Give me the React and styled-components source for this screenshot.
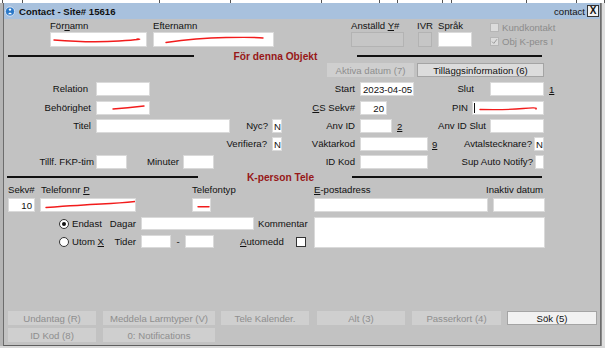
import React from "react";
import styled, { createGlobalStyle } from "styled-components";

const GlobalStyle = createGlobalStyle`
  html, body { margin: 0; padding: 0; background: #d6d6d6; }
  body { font-family: "Liberation Sans", Arial, sans-serif; font-size: 9.6px; color: #111; }
`;

const Desktop = styled.div`
  width: 605px;
  height: 348px;
  overflow: hidden;
  background: #d6d6d6;
  display: flex;
  flex-direction: column;
`;

const TopStrip = styled.div`
  height: 3px;
  display: flex;
  background: #fff;
  flex: none;
`;

const StripCell = styled.div`
  width: ${(p) => p.$w}px;
  flex: none;
  box-sizing: border-box;
  border-right: 1px solid #555;
  height: 3px;
`;

const Middle = styled.div`
  display: flex;
  flex: none;
  height: 343px;
`;

const LeftEdge = styled.div`
  width: 3px;
  background: #b4b4b4;
  flex: none;
`;

const RightEdge = styled.div`
  width: 4px;
  flex: none;
  background: #dedede;
  border-left: 1px solid #8a8a8a;
  box-sizing: border-box;
`;

const Window = styled.div`
  width: 598px;
  height: 343px;
  box-sizing: border-box;
  flex: none;
  background: #c2c2c2;
  border-left: 1px solid #6c6c6c;
  border-right: 1px solid #6c6c6c;
  border-bottom: 1px solid #5e5e5e;
  display: flex;
  flex-direction: column;
`;

const TitleBar = styled.div`
  height: 16px;
  flex: none;
  background: #a8c1dd;
  display: flex;
  align-items: center;
  padding: 0 1px 0 1px;
`;

const TitleText = styled.span`
  font-weight: bold;
  margin-left: 4px;
  white-space: nowrap;
`;

const TitleRight = styled.span`
  margin-left: auto;
  margin-right: 2px;
`;

const CloseBtn = styled.div`
  width: 12px;
  height: 12px;
  box-sizing: border-box;
  border: 1px solid #333;
  background: #f2f2f2;
  font-weight: bold;
  font-size: 10px;
  line-height: 10px;
  text-align: center;
`;

const HeaderRow = styled.div`
  display: flex;
  align-items: flex-start;
  padding-top: 2px;
  height: 26px;
  flex: none;
`;

const Col = styled.div`
  display: flex;
  flex-direction: column;
  width: ${(p) => p.$w}px;
  margin-left: ${(p) => p.$ml || 0}px;
  flex: none;
`;

const HeadLabel = styled.div`
  height: 11px;
  line-height: 10px;
  white-space: nowrap;
`;

const Field = styled.div`
  position: relative;
  box-sizing: border-box;
  flex: none;
  width: ${(p) => p.$w}px;
  height: ${(p) => p.$h || 14}px;
  margin-left: ${(p) => p.$ml || 0}px;
  background: ${(p) => (p.$disabled ? "#c6c6c6" : "#fff")};
  border: 1px solid ${(p) => (p.$disabled ? "#b3b3b3" : "#dadada")};
  display: flex;
  align-items: center;
  justify-content: ${(p) => (p.$right ? "flex-end" : "flex-start")};
  padding: 0 2px;
  white-space: nowrap;
  overflow: hidden;
`;

const Caret = styled.span`
  width: 1px;
  height: 10px;
  background: #111;
  margin-left: -1px;
`;

const Scribble = styled.svg`
  position: absolute;
  left: 0;
  top: 0;
  width: 100%;
  height: 100%;
  overflow: visible;
`;

const CheckCol = styled.div`
  display: flex;
  flex-direction: column;
  margin-left: ${(p) => p.$ml}px;
  padding-top: 2px;
  gap: 5px;
`;

const CheckRow = styled.div`
  display: flex;
  align-items: center;
  height: 9px;
  gap: 3px;
  color: ${(p) => (p.$disabled ? "#8c8c8c" : "#111")};
  white-space: nowrap;
`;

const Box = styled.span`
  width: ${(p) => p.$size || 9}px;
  height: ${(p) => p.$size || 9}px;
  box-sizing: border-box;
  flex: none;
  background: ${(p) => (p.$disabled ? "#dcdcdc" : "#fff")};
  border: 1px solid ${(p) => (p.$disabled ? "#b6b6b6" : "#333")};
  display: flex;
  align-items: center;
  justify-content: center;
  margin-left: ${(p) => p.$ml || 0}px;
`;

const SectionHead = styled.div`
  display: flex;
  align-items: center;
  height: 12px;
  flex: none;
  width: ${(p) => p.$w}px;
  margin-left: ${(p) => p.$ml}px;
  margin-top: ${(p) => p.$mt}px;
`;

const Line = styled.div`
  width: ${(p) => p.$w}px;
  height: 2px;
  background: #111;
  flex: none;
`;

const SectionTitle = styled.div`
  flex: 1;
  text-align: center;
  font-weight: bold;
  font-size: 10.2px;
  color: #971818;
  padding-left: ${(p) => p.$shift || 0}px;
  white-space: nowrap;
`;

const Row = styled.div`
  display: flex;
  align-items: center;
  height: ${(p) => p.$h || 14}px;
  margin-top: ${(p) => p.$mt || 0}px;
  flex: none;
`;

const Label = styled.span`
  flex: none;
  width: ${(p) => (p.$w ? `${p.$w}px` : "auto")};
  margin-left: ${(p) => p.$ml || 0}px;
  text-align: ${(p) => (p.$left ? "left" : "right")};
  white-space: nowrap;
  line-height: 14px;
`;

const Hot = styled.span`
  text-decoration: underline;
  text-underline-offset: 1px;
`;

const Link = styled.span`
  flex: none;
  margin-left: ${(p) => p.$ml}px;
  text-decoration: underline;
  text-underline-offset: 1px;
  width: 6px;
`;

const Button = styled.div`
  flex: none;
  box-sizing: border-box;
  width: ${(p) => p.$w}px;
  height: 14px;
  margin-left: ${(p) => p.$ml || 0}px;
  display: flex;
  align-items: center;
  justify-content: center;
  white-space: nowrap;
  background: ${(p) => (p.$active ? "#f1f1f1" : "#cfcfcf")};
  color: ${(p) => (p.$active ? "#111" : "#8e8e8e")};
  border: 1px solid ${(p) => (p.$active ? "#a4a4a4" : "#cfcfcf")};
`;

const LowerArea = styled.div`
  display: flex;
  margin-top: 5px;
  flex: none;
`;

const LeftBlock = styled.div`
  width: 310px;
  display: flex;
  flex-direction: column;
  gap: 5px;
`;

const Radio = styled.span`
  width: 10px;
  height: 10px;
  box-sizing: border-box;
  border-radius: 50%;
  border: 1px solid #333;
  background: #fff;
  display: flex;
  align-items: center;
  justify-content: center;
  flex: none;
  &::after {
    content: "";
    width: 4px;
    height: 4px;
    border-radius: 50%;
    background: ${(p) => (p.$on ? "#111" : "transparent")};
  }
`;

const RadioItem = styled.div`
  display: flex;
  align-items: center;
  gap: 3px;
  width: 45px;
  margin-left: 55px;
  flex: none;
  white-space: nowrap;
`;

const Dash = styled.span`
  width: 14px;
  text-align: center;
  flex: none;
`;

const Footer = styled.div`
  margin-top: auto;
  padding-bottom: 3px;
  display: flex;
  flex-direction: column;
  gap: 3px;
`;

const BottomStrip = styled.div`
  height: 2px;
  background: #d8d8d8;
  flex: none;
`;

const Scrib = ({ d }) => (
  <Scribble>
    <path d={d} fill="none" stroke="#f21c1c" strokeWidth="1.4" strokeLinecap="round" />
  </Scribble>
);

const AppIcon = () => (
  <svg width="10" height="11" viewBox="0 0 10 11">
    <circle cx="5" cy="5.5" r="4.6" fill="#2a78c8" stroke="#e8f0fa" strokeWidth="0.8" />
    <circle cx="5" cy="3.6" r="1.2" fill="#fff" />
    <path d="M3 8.2 Q5 4.8 7 8.2 Z" fill="#fff" />
  </svg>
);

const stripCells = [3, 20, 137, 71, 91, 58, 18, 45, 9, 75, 50, 28];

export default function App() {
  return (
    <>
      <GlobalStyle />
      <Desktop>
        <TopStrip>
          {stripCells.map((w, i) => (
            <StripCell key={i} $w={w} />
          ))}
        </TopStrip>
        <Middle>
          <LeftEdge />
          <Window>
            <TitleBar>
              <AppIcon />
              <TitleText>Contact - Site# 15616</TitleText>
              <TitleRight>contact</TitleRight>
              <CloseBtn>X</CloseBtn>
            </TitleBar>

            <HeaderRow>
              <Col $ml={46} $w={97}>
                <HeadLabel>
                  För<Hot>n</Hot>amn
                </HeadLabel>
                <Field $w={97} $h={15}>
                  <Scrib d="M3 7 Q40 10 68 8 T86 6" />
                </Field>
              </Col>
              <Col $ml={6} $w={121}>
                <HeadLabel>Efternamn</HeadLabel>
                <Field $w={121} $h={15}>
                  <Scrib d="M12 9.5 Q42 5 72 4.5 T109 5" />
                </Field>
              </Col>
              <Col $ml={77} $w={53}>
                <HeadLabel>
                  Anställd <Hot>Y</Hot>#
                </HeadLabel>
                <Field $w={53} $h={15} $disabled />
              </Col>
              <Col $ml={13} $w={16}>
                <HeadLabel>IVR</HeadLabel>
                <Field $w={14} $h={15} $ml={1} $disabled />
              </Col>
              <Col $ml={5} $w={34}>
                <HeadLabel>Språk</HeadLabel>
                <Field $w={34} $h={15} />
              </Col>
              <CheckCol $ml={18}>
                <CheckRow $disabled>
                  <Box $disabled />
                  Kundkontakt
                </CheckRow>
                <CheckRow $disabled>
                  <Box $disabled>
                    <svg width="7" height="7" viewBox="0 0 7 7">
                      <path d="M1 3.6 L2.8 5.4 L6 1.2" fill="none" stroke="#9a9a9a" strokeWidth="1" />
                    </svg>
                  </Box>
                  Obj K-pers I
                </CheckRow>
              </CheckCol>
            </HeaderRow>

            <SectionHead $w={534} $ml={4} $mt={3}>
              <Line $w={186} />
              <SectionTitle>För denna Objekt</SectionTitle>
              <Line $w={185} />
            </SectionHead>

            <Row $mt={1}>
              <Button $w={87} $ml={323}>
                Aktiva datum (7)
              </Button>
              <Button $w={127} $ml={3} $active style={{ background: "#dcdcdc" }}>
                Tilläggsinformation (6)
              </Button>
            </Row>

            <Row $mt={5}>
              <Label $w={84}>Relation</Label>
              <Field $w={54} $ml={8} />
              <Label $w={205}>Start</Label>
              <Field $w={54} $ml={5}>2023-04-05</Field>
              <Label $w={60}>Slut</Label>
              <Field $w={54} $ml={16} />
              <Link $ml={5}>1</Link>
            </Row>

            <Row $mt={5}>
              <Label $w={87}>Behörighet</Label>
              <Field $w={54} $ml={5}>
                <Scrib d="M16 7 Q30 6 47 4" />
              </Field>
              <Label $w={205}>
                <Hot>C</Hot>S Sekv#
              </Label>
              <Field $w={27} $ml={5} $right>
                20
              </Field>
              <Label $w={81}>PIN</Label>
              <Field $w={72} $ml={4}>
                <Caret />
                <Scrib d="M7 7.5 Q35 8 50 6.5 T63 7" />
              </Field>
            </Row>

            <Row $mt={4}>
              <Label $w={87}>Titel</Label>
              <Field $w={134} $ml={5} />
              <Label $w={38}>Nyc?</Label>
              <Field $w={10} $ml={4} style={{ padding: "0 1px" }}>
                N
              </Field>
              <Label $w={73}>Anv ID</Label>
              <Field $w={32} $ml={5} />
              <Link $ml={5}>2</Link>
              <Label $w={83}>Anv ID Slut</Label>
              <Field $w={54} $ml={4} />
            </Row>

            <Row $mt={4}>
              <Label $w={263}>Verifiera?</Label>
              <Field $w={10} $ml={5} style={{ padding: "0 1px" }}>
                N
              </Field>
              <Label $w={73}>Väktarkod</Label>
              <Field $w={68} $ml={5} />
              <Link $ml={4}>9</Link>
              <Label $w={94}>Avtalstecknare?</Label>
              <Field $w={10} $ml={2} style={{ padding: "0 1px" }}>
                N
              </Field>
            </Row>

            <Row $mt={4}>
              <Label $w={90}>Tillf. FKP-tim</Label>
              <Field $w={31} $ml={2} />
              <Label $w={52}>Minuter</Label>
              <Field $w={31} $ml={4} />
              <Label $w={141}>ID Kod</Label>
              <Field $w={68} $ml={5} />
              <Label $w={105}>Sup Auto Notify?</Label>
              <Field $w={9} $ml={2} />
            </Row>

            <SectionHead $w={535} $ml={3} $mt={2}>
              <Line $w={191} />
              <SectionTitle $shift={11}>K-person Tele</SectionTitle>
              <Line $w={190} />
            </SectionHead>

            <Row $h={12} $mt={1}>
              <Label $left $w={33} $ml={4}>
                Sekv#
              </Label>
              <Label $left $w={151}>
                Telefonnr <Hot>P</Hot>
              </Label>
              <Label $left $w={122}>
                Telefontyp
              </Label>
              <Label $left $w={172}>
                <Hot>E</Hot>-postadress
              </Label>
              <Label $left>Inaktiv datum</Label>
            </Row>

            <Row $mt={2}>
              <Field $w={27} $ml={4} $right>
                10
              </Field>
              <Field $w={96} $ml={5}>
                <Scrib d="M5 8.5 Q40 6 60 5 T94 2.5" />
              </Field>
              <Field $w={19} $ml={56}>
                <Scrib d="M5 7.7 L16 7.7" />
              </Field>
              <Field $w={174} $ml={103} />
              <Field $w={52} $ml={5} />
            </Row>

            <LowerArea>
              <LeftBlock>
                <Row $h={13}>
                  <RadioItem>
                    <Radio $on />
                    Endast
                  </RadioItem>
                  <Label $w={32}>Dagar</Label>
                  <Field $w={113} $h={13} $ml={5} />
                  <Label $ml={4}>Kommentar</Label>
                </Row>
                <Row $h={13}>
                  <RadioItem>
                    <Radio />
                    <span>
                      Utom <Hot>X</Hot>
                    </span>
                  </RadioItem>
                  <Label $w={32}>Tider</Label>
                  <Field $w={30} $h={13} $ml={5} />
                  <Dash>-</Dash>
                  <Field $w={29} $h={13} />
                  <Label $left $w={56} $ml={26}>
                    <Hot>A</Hot>utomedd
                  </Label>
                  <Box $size={10} />
                </Row>
              </LeftBlock>
              <Field $w={231} $h={31} />
            </LowerArea>

            <Footer>
              <Row>
                <Button $w={88} $ml={4}>Undantag (R)</Button>
                <Button $w={112} $ml={7}>Meddela Larmtyper (V)</Button>
                <Button $w={88} $ml={6}>Tele Kalender.</Button>
                <Button $w={88} $ml={8}>Alt (3)</Button>
                <Button $w={89} $ml={7}>Passerkort (4)</Button>
                <Button $w={90} $ml={6} $active>Sök (5)</Button>
              </Row>
              <Row>
                <Button $w={88} $ml={4}>ID Kod (8)</Button>
                <Button $w={112} $ml={7}>0: Notifications</Button>
              </Row>
            </Footer>
          </Window>
          <RightEdge />
        </Middle>
        <BottomStrip />
      </Desktop>
    </>
  );
}
